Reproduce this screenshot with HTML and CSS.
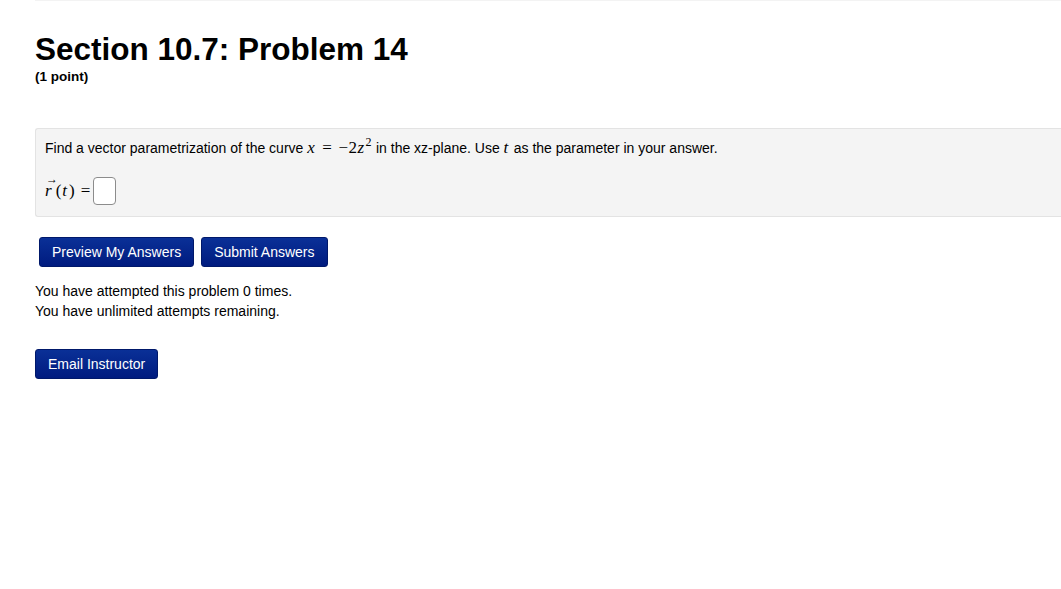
FILE: index.html
```html
<!DOCTYPE html>
<html lang="en">
<head>
    <meta charset="UTF-8">
    <meta name="viewport" content="width=device-width, initial-scale=1.0">
    <title>Section 10.7: Problem 14</title>
    <link rel="stylesheet" href="styles.css">
</head>
<body>
    <div class="topline"></div>
    <div class="container">
        <h1>Section 10.7: Problem 14</h1>
        <div class="points">(1 point)</div>

        <div class="problem">
            <p class="question">
                Find a vector parametrization of the curve
                <span class="math"><i>x</i><span class="op">=</span>&minus;2<i>z</i><sup>2</sup></span>
                in the xz-plane. Use <span class="math"><i>t</i></span> as the parameter in your answer.
            </p>
            <div class="answer-row">
                <span class="math"><span class="vec"><i>r</i></span>(<i>t</i>)<span class="op">=</span></span>
                <input type="text" class="answer-input">
            </div>
        </div>

        <div class="button-group">
            <button class="btn">Preview My Answers</button>
            <button class="btn">Submit Answers</button>
        </div>

        <div class="attempts">
            You have attempted this problem 0 times.<br>
            You have unlimited attempts remaining.
        </div>

        <button class="btn email-btn">Email Instructor</button>
    </div>
</body>
</html>
```

FILE: styles.css
```css
* {
    margin: 0;
    padding: 0;
    box-sizing: border-box;
}

body {
    background: white;
    font-family: 'Liberation Sans', Arial, sans-serif;
    font-size: 14px;
    color: #000;
}

.topline {
    height: 1px;
    margin-left: 35px;
    background: #f3f3f3;
}

.container {
    padding: 0 0 0 35px;
}

h1 {
    font-size: 31.5px;
    font-weight: bold;
    line-height: 40px;
    margin-top: 28px;
}

.points {
    font-size: 13.5px;
    font-weight: bold;
    line-height: 16px;
}

.problem {
    margin-top: 43px;
    background: #f4f4f4;
    border: 1px solid #e3e3e3;
    border-right: none;
    border-radius: 3px 0 0 3px;
    padding: 9px 9px 10px 9px;
    height: 89px;
}

.question {
    line-height: 20px;
}

.math {
    font-family: 'Liberation Serif', 'DejaVu Serif', serif;
    font-size: 17px;
    letter-spacing: 0.5px;
}

.math i {
    font-style: italic;
    padding-right: 1px;
}

.math sup {
    font-size: 12px;
    line-height: 0;
}

.op {
    margin: 0 6px;
}

.vec {
    position: relative;
    padding-right: 2px;
}

.vec::after {
    content: '\2192';
    position: absolute;
    left: 1px;
    top: -9px;
    font-size: 12px;
    font-style: normal;
}

.answer-row {
    display: flex;
    align-items: center;
    margin-top: 19px;
}

.answer-row .math {
    letter-spacing: 1px;
}

.answer-row .op {
    margin: 0 2px 0 5px;
}

.answer-input {
    width: 23px;
    height: 28px;
    border: 1px solid #8c8c8c;
    border-radius: 4px;
    background: white;
}

.button-group {
    display: flex;
    gap: 7px;
    margin-top: 20px;
    padding-left: 4px;
}

.btn {
    background: linear-gradient(#0a3097, #001b7f);
    border: 1px solid #00186a;
    border-radius: 3px;
    color: white;
    font-family: 'Liberation Sans', Arial, sans-serif;
    font-size: 14px;
    height: 30px;
    padding: 0 12px;
    cursor: pointer;
}

.attempts {
    margin-top: 14px;
    line-height: 20px;
}

.email-btn {
    margin-top: 28px;
}
```
